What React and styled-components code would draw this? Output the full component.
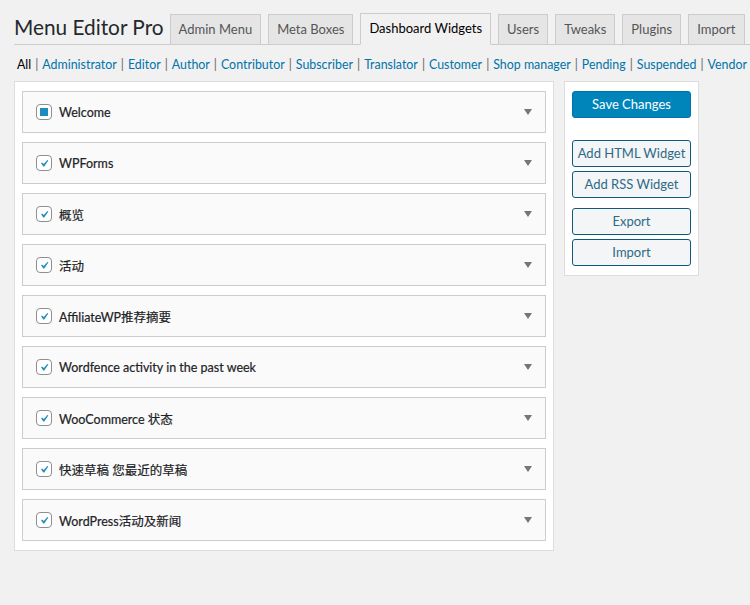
import styled, { createGlobalStyle } from 'styled-components'

const GlobalStyle = createGlobalStyle`
  html, body {
    margin: 0;
    background: #f1f1f1;
    font-family: Lato, 'Noto Sans CJK SC', sans-serif;
    color: #23282d;
    font-size: 13px;
  }
`

const tabs = ['Admin Menu', 'Meta Boxes', 'Dashboard Widgets', 'Users', 'Tweaks', 'Plugins', 'Import']
const roles = ['Administrator', 'Editor', 'Author', 'Contributor', 'Subscriber', 'Translator', 'Customer', 'Shop manager', 'Pending', 'Suspended', 'Vendor Staff']
const widgets = [
  { title: 'Welcome', partial: true },
  { title: 'WPForms' },
  { title: '概览' },
  { title: '活动' },
  { title: 'AffiliateWP推荐摘要' },
  { title: 'Wordfence activity in the past week' },
  { title: 'WooCommerce 状态' },
  { title: '快速草稿 您最近的草稿' },
  { title: 'WordPress活动及新闻' },
]

const Page = styled.div`
  padding: 13px 0 0 14px;
  width: 736px;
  overflow: hidden;
`

const Header = styled.div`
  display: flex;
  align-items: flex-end;
  border-bottom: 1px solid #ccc;
  height: 31px;
  white-space: nowrap;
`

const Title = styled.h1`
  margin: -1px 6px 0 0;
  font-size: 20.8px;
  font-weight: 400;
  line-height: 29px;
  color: #23282d;
  align-self: flex-start;
`

const Tab = styled.div`
  flex: none;
  box-sizing: border-box;
  padding: 0 8px;
  margin-right: 7px;
  margin-bottom: -1px;
  border: 1px solid #ccc;
  border-bottom: 1px solid ${p => (p.$active ? '#f1f1f1' : '#ccc')};
  background: ${p => (p.$active ? '#f1f1f1' : '#e5e5e5')};
  color: ${p => (p.$active ? '#000' : '#555')};
  font-size: 13px;
  font-weight: 400;
  line-height: 29px;
  height: ${p => (p.$active ? '32px' : '31px')};
`

const Filters = styled.div`
  display: flex;
  white-space: nowrap;
  margin: 12px 0 0 3px;
  font-size: 12.4px;
  line-height: 16px;
  color: #555;
`

const Current = styled.span`
  color: #000;
`

const RoleLink = styled.a`
  color: #0073aa;
  text-decoration: none;
`

const Sep = styled.span`
  color: #666;
  margin: 0 4px 0 4px;
`

const Columns = styled.div`
  display: flex;
  align-items: flex-start;
  gap: 10px;
  margin-top: 8px;
`

const MainPanel = styled.div`
  width: 540px;
  box-sizing: border-box;
  background: #fff;
  border: 1px solid #ddd;
  padding: 9px 7px 9px 7px;
  display: flex;
  flex-direction: column;
  gap: 9px;
`

const Widget = styled.div`
  height: 42px;
  box-sizing: border-box;
  border: 1px solid #ccc;
  background: #fafafa;
  display: flex;
  align-items: center;
  padding: 0 13px 0 13px;
`

const Check = styled.span`
  width: 16px;
  height: 16px;
  box-sizing: border-box;
  border: 1px solid #8c8f94;
  border-radius: 4px;
  background: #fff;
  display: flex;
  align-items: center;
  justify-content: center;
  margin-right: 7px;
  flex: none;
`

const Partial = styled.span`
  width: 8px;
  height: 8px;
  background: #1e8cbe;
`

const Label = styled.span`
  flex: 1;
  font-size: 12.5px;
  font-weight: 400;
  color: #1d2327;
  -webkit-text-stroke: 0.2px #1d2327;
`

const Arrow = styled.span`
  width: 0;
  height: 0;
  border-left: 4px solid transparent;
  border-right: 4px solid transparent;
  border-top: 6px solid #72777c;
`

const SidePanel = styled.div`
  width: 135px;
  box-sizing: border-box;
  background: #fff;
  border: 1px solid #ddd;
  padding: 9px 7px 9px 7px;
  display: flex;
  flex-direction: column;
`

const Button = styled.div`
  height: 27px;
  box-sizing: border-box;
  border-radius: 3px;
  border: 1px solid ${p => (p.$primary ? '#0073aa' : '#0e5a7d')};
  background: ${p => (p.$primary ? '#0085ba' : '#f3f5f6')};
  color: ${p => (p.$primary ? '#fff' : '#2e6a87')};
  font-size: 13px;
  line-height: 25px;
  text-align: center;
  margin-top: ${p => p.$gap || 0}px;
  white-space: nowrap;
`

function CheckBox({ partial }) {
  return (
    <Check>
      {partial ? (
        <Partial />
      ) : (
        <svg width="15" height="15" viewBox="0 0 20 20">
          <path d="M14.83 4.89l1.34.94-5.81 8.38H9.02L5.78 9.67l1.34-1.25 2.57 2.4z" fill="#1e8cbe" />
        </svg>
      )}
    </Check>
  )
}

export default function App() {
  return (
    <Page>
      <GlobalStyle />
      <Header>
        <Title>Menu Editor Pro</Title>
        {tabs.map(t => (
          <Tab key={t} $active={t === 'Dashboard Widgets'}>{t}</Tab>
        ))}
      </Header>
      <Filters>
        <Current>All</Current>
        {roles.map(r => (
          <span key={r}>
            <Sep>|</Sep>
            <RoleLink href="#">{r}</RoleLink>
          </span>
        ))}
      </Filters>
      <Columns>
        <MainPanel>
          {widgets.map(w => (
            <Widget key={w.title}>
              <CheckBox partial={w.partial} />
              <Label>{w.title}</Label>
              <Arrow />
            </Widget>
          ))}
        </MainPanel>
        <SidePanel>
          <Button $primary>Save Changes</Button>
          <Button $gap={22}>Add HTML Widget</Button>
          <Button $gap={4}>Add RSS Widget</Button>
          <Button $gap={10}>Export</Button>
          <Button $gap={4}>Import</Button>
        </SidePanel>
      </Columns>
    </Page>
  )
}
